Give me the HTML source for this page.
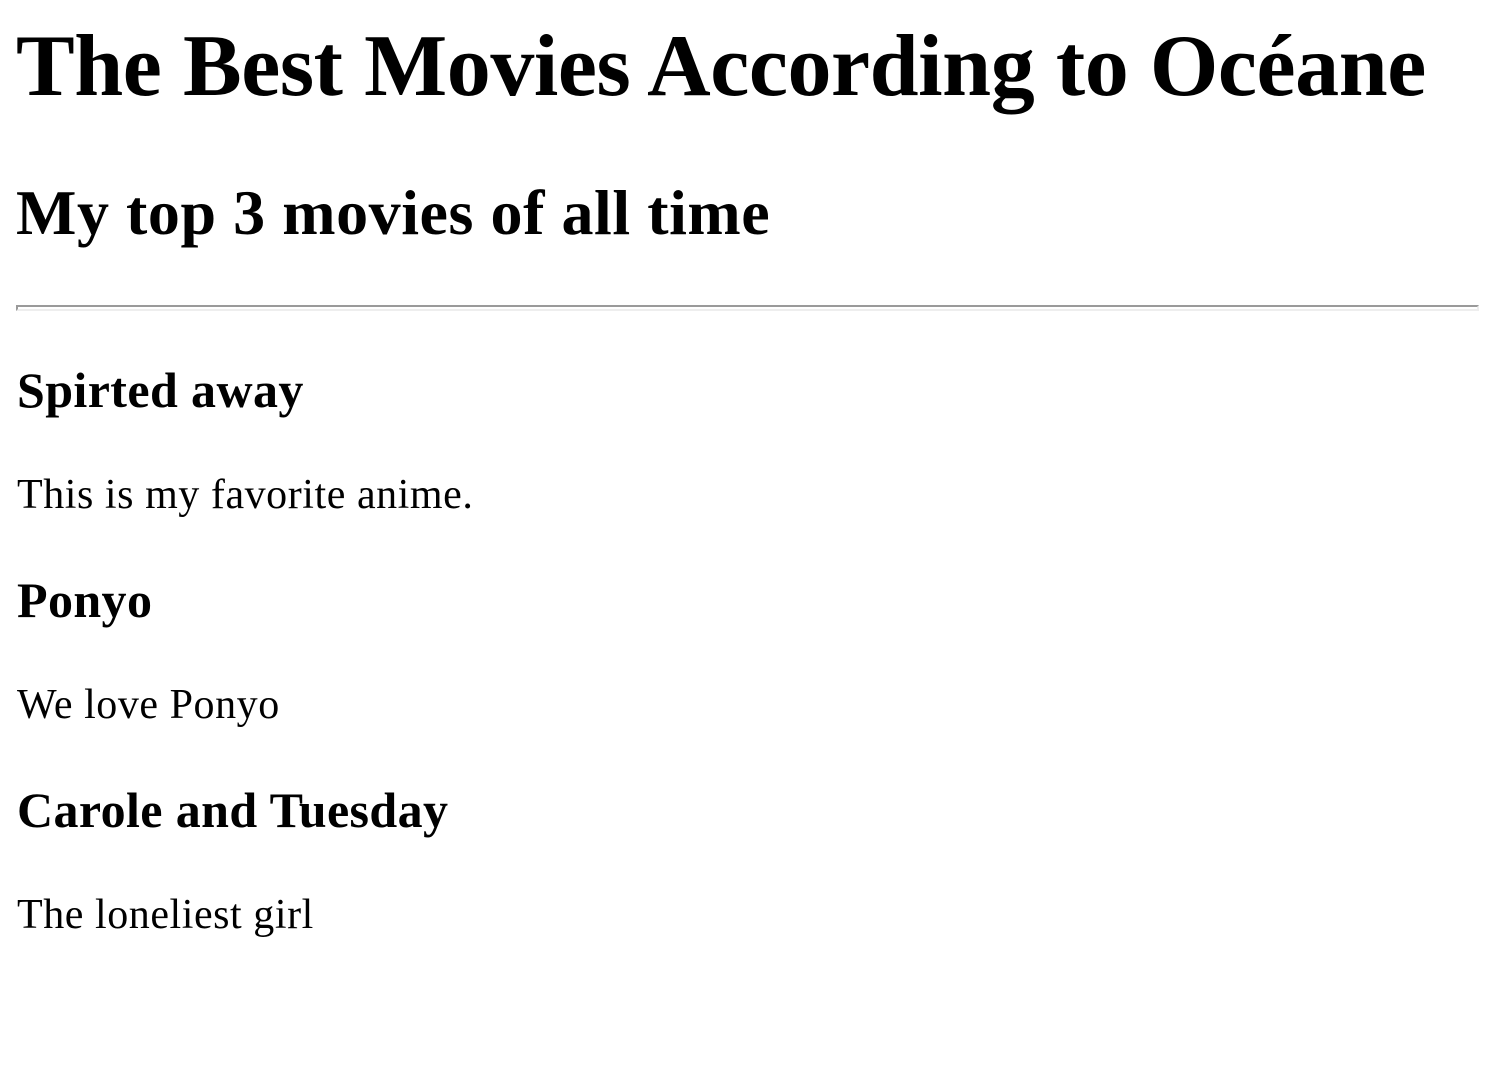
<!DOCTYPE html>
<html><head><meta charset="utf-8"><style>
html,body{margin:0;padding:0;background:#fff;width:1500px;height:1072px;overflow:hidden}
body{position:relative;font-family:"Liberation Serif",serif;color:#000}
.t{position:absolute;left:17px;margin:0;line-height:1;white-space:nowrap}
h1.t{font-size:88px;font-weight:bold;top:23px;left:16px;letter-spacing:-0.43px}
h2.t{font-size:64px;font-weight:bold;top:181px;left:16px;letter-spacing:0.55px}
h3.t{font-size:50px;font-weight:bold;letter-spacing:0.4px}
p.t{font-size:42px;letter-spacing:0.55px}
hr{position:absolute;left:16px;top:305px;width:1459px;height:2px;margin:0;border-style:solid;border-width:2px;border-color:#9a9a9a #eee #eee #9a9a9a;padding:0}
</style></head><body>
<h1 class="t">The Best Movies According to Océane</h1>
<h2 class="t">My top 3 movies of all time</h2>
<hr>
<h3 class="t" style="top:365px">Spirted away</h3>
<p class="t" style="top:474px">This is my favorite anime.</p>
<h3 class="t" style="top:575px">Ponyo</h3>
<p class="t" style="top:684px">We love Ponyo</p>
<h3 class="t" style="top:785px">Carole and Tuesday</h3>
<p class="t" style="top:894px">The loneliest girl</p>
</body></html>
